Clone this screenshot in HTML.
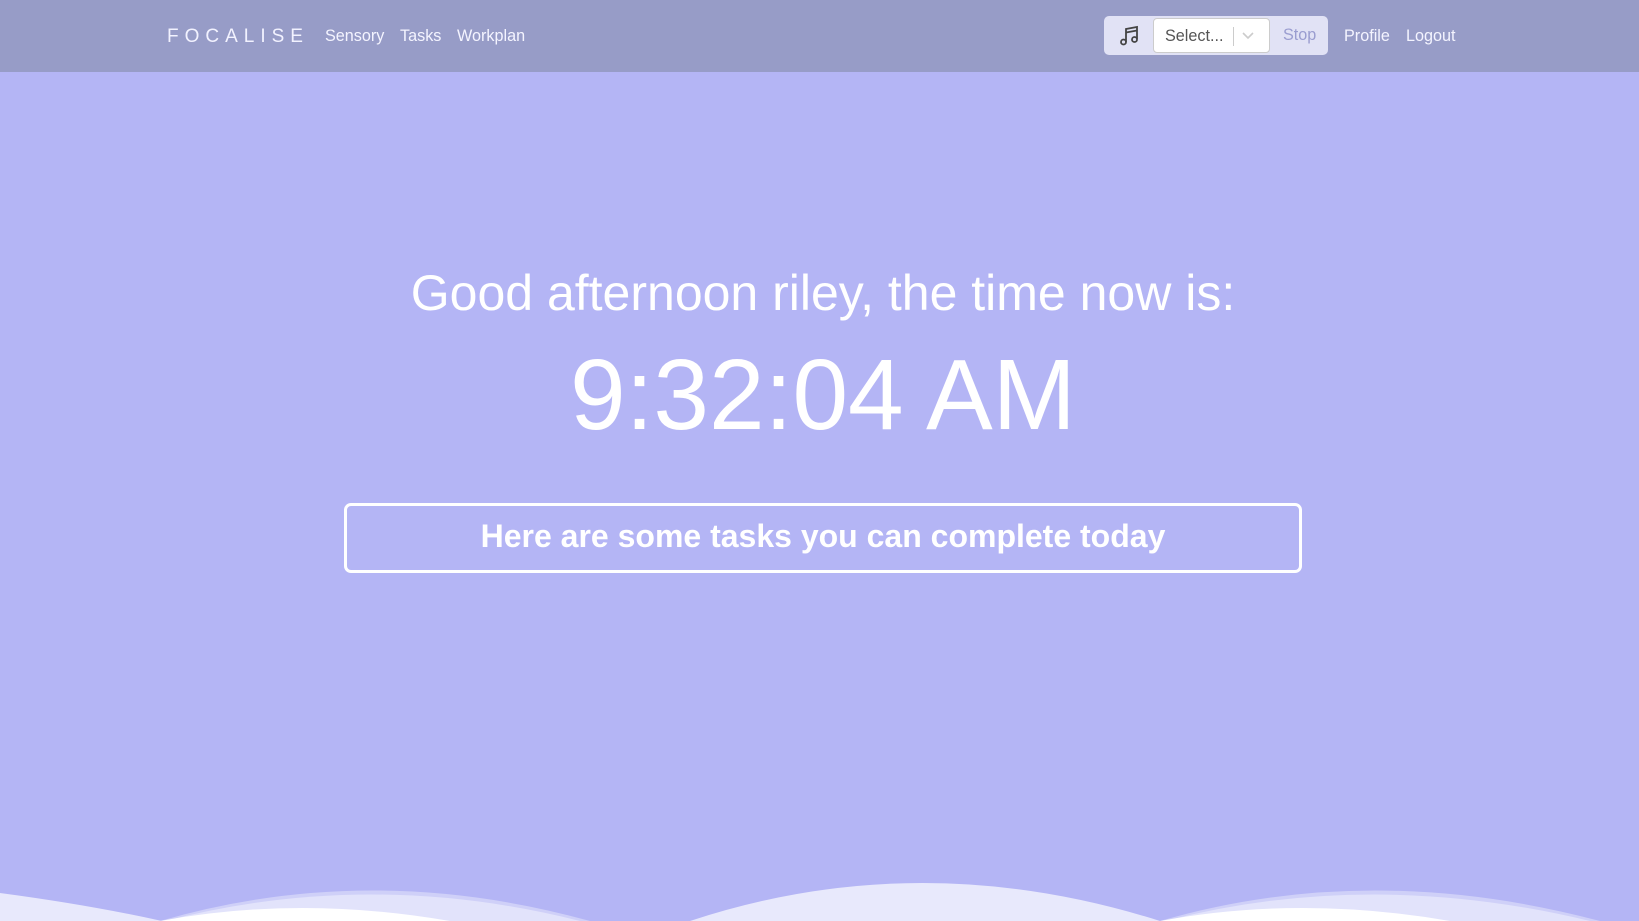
<!DOCTYPE html>
<html><head><meta charset="utf-8"><style>
*{margin:0;padding:0;box-sizing:border-box}
body{width:1639px;height:921px;overflow:hidden;background:#b4b5f5;font-family:"Liberation Sans",Arial,sans-serif;position:relative}
.nav{position:absolute;left:0;top:0;width:1639px;height:72px;background:#979cc7}
.brand{position:absolute;left:167px;top:26px;color:#f2f2ff;font-size:19px;letter-spacing:6px}
.link{position:absolute;top:27px;color:#f4f4ff;font-size:16.2px}
.grp{position:absolute;left:1104px;top:16px;width:224px;height:39px;background:#e1e2f5;border-radius:5px}
.sel{position:absolute;left:49px;top:2px;width:117px;height:35px;background:#fff;border:1px solid #ccc;border-radius:4px}
.sel span{position:absolute;left:11px;top:8px;font-size:16.2px;color:#555}
.sel i{position:absolute;left:79px;top:8px;width:1px;height:19px;background:#ccc}
.stop{position:absolute;left:179px;top:10px;font-size:16.2px;color:#9a9dd0}
.g{position:absolute;left:0;width:1646px;text-align:center;color:#fff}
.box{position:absolute;left:344px;top:503px;width:958px;height:70px;border:3px solid #fff;border-radius:7px;color:#fff;font-weight:bold;font-size:32px;text-align:center;line-height:60px}
</style></head><body>
<div class="nav">
<div class="brand">FOCALISE</div>
<div class="link" style="left:325px">Sensory</div>
<div class="link" style="left:400px">Tasks</div>
<div class="link" style="left:457px">Workplan</div>
<div class="grp">
<svg style="position:absolute;left:14px;top:9px" width="22" height="22" viewBox="0 0 22 22" fill="none" stroke="#444" stroke-width="1.8"><path d="M8 17V4l11-2v12"/><circle cx="5.5" cy="17" r="2.5"/><circle cx="16.5" cy="14.5" r="2.5"/><path d="M8 7.5l11-2"/></svg>
<div class="sel"><span>Select...</span><i></i><svg style="position:absolute;left:88px;top:13px" width="12" height="8" viewBox="0 0 12 8" fill="none" stroke="#ccc" stroke-width="1.6"><path d="M1 1l5 5 5-5"/></svg></div>
<div class="stop">Stop</div>
</div>
<div class="link" style="left:1344px">Profile</div>
<div class="link" style="left:1406px">Logout</div>
</div>
<div class="g" style="top:264px;font-size:50px">Good afternoon riley, the time now is:</div>
<div class="g" style="top:338px;font-size:100px">9:32:04 AM</div>
<div class="box">Here are some tasks you can complete today</div>
<svg style="position:absolute;left:0;top:880px" width="1639" height="41" viewBox="0 0 1639 41">
<path d="M160 41Q370-20 590 41Z" fill="#cfd0f8"/>
<path d="M1160 41Q1370-20 1600 41Z" fill="#cfd0f8"/>
<path d="M165 41Q370-12 580 41Z" fill="#e2e3fb"/>
<path d="M1165 41Q1370-12 1590 41Z" fill="#e2e3fb"/>
<path d="M160 41Q300 15 450 41Z" fill="#fff"/>
<path d="M1160 41Q1300 15 1450 41Z" fill="#fff"/>
<path d="M0 13Q90 25 162 41H0Z" fill="#e8e9fc"/>
<path d="M690 41Q920-35 1160 41Z" fill="#e8e9fc"/>
</svg>
</body></html>
